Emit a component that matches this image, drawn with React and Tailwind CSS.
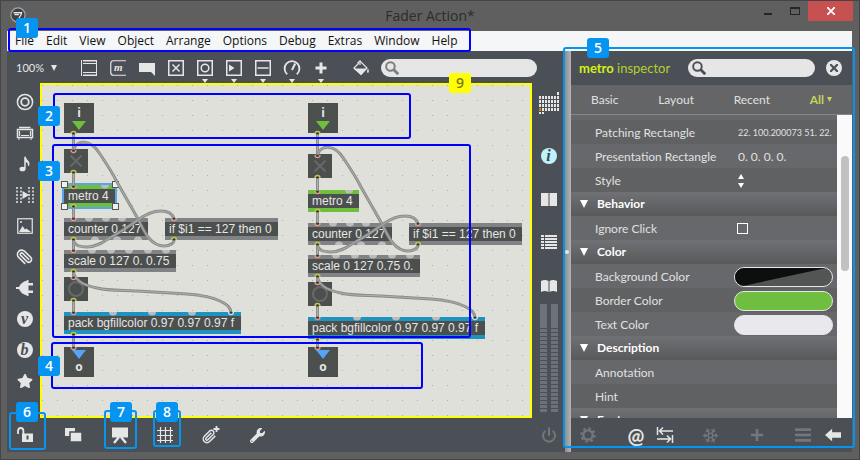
import clsx from 'clsx';
import { FaStar, FaWrench } from 'react-icons/fa';
import { Paperclip, Power, Snowflake } from 'lucide-react';

const MENU = ['File', 'Edit', 'View', 'Object', 'Arrange', 'Options', 'Debug', 'Extras', 'Window', 'Help'];

const Glyph = ({ className = 'w-[18px] h-[18px]', children }) => (
    <svg viewBox="0 0 18 18" className={clsx('shrink-0', className)} fill="none" stroke="currentColor" strokeWidth="1.5" aria-hidden="true">
        {children}
    </svg>
);

const solid = { fill: 'currentColor', stroke: 'none' };
const Box = () => <rect x="1.75" y="1.75" width="14.5" height="14.5" />;

const TOOLS = [
    { name: 'Object', art: <><path d="M1.5 1v16M16.5 1v16" strokeWidth="1" /><path d="M3 1.75h14M3 16.25h14" /><path d="M3 4.5h14M3 13.5h14" strokeWidth="1" /></> },
    { name: 'Message', art: <><path d="M17 1.75H4.5Q1.75 1.75 1.75 4.5v9q0 2.75 2.75 2.75H17" strokeWidth="1.2" /><text x="5" y="12" fontSize="11" fontStyle="italic" fontWeight="700" fontFamily="Liberation Serif, serif" {...solid}>m</text></> },
    { name: 'Comment', art: <path d="M1 4h16v13l-4-4H1z" {...solid} /> },
    { name: 'Toggle', art: <><Box /><path d="m5.5 5.5 7 7m0-7-7 7" /></> },
    { name: 'Button', menu: true, art: <><Box /><circle cx="9" cy="9" r="3.8" /></> },
    { name: 'Number', menu: true, art: <><Box /><path d="m4 5.5 5.5 3.5L4 12.5z" {...solid} /></> },
    { name: 'Slider', menu: true, art: <><Box /><path d="M3.5 9h11" /></> },
    { name: 'Dial', menu: true, art: <><path d="M4.2 15.2a7.4 7.4 0 1 1 9.6 0" strokeWidth="1.8" /><path d="m9 11 3.2-6.5" strokeWidth="2" /></> },
    { name: 'Add', menu: true, art: <path d="M9 3.5v11M3.5 9h11" strokeWidth="3" /> },
];

const BROWSERS = [
    { name: 'Packages', art: <Glyph><circle cx="9" cy="9" r="7.6" /><circle cx="9" cy="9" r="3.8" strokeWidth="1.8" /></Glyph> },
    { name: 'Racks', art: <Glyph><path d="M3 3.5h11.5M1.5 5.5h15v8h-15z" /><path d="M3.5 7v5M14.5 7v5M5 11.5h8M2 15h2m10 0h2" strokeWidth="1.2" /></Glyph> },
    { name: 'Audio', art: <Glyph><path d="M9 1.5c1 4 5.5 4.500 3.500 9.500 0-3-1-4-3.500-4.500" fill="currentColor" strokeWidth="1" /><path d="M9 2v11.500" /><ellipse cx="6.500" cy="14" rx="3" ry="2.300" {...solid} /></Glyph> },
    { name: 'Video', art: <Glyph><path d="M1 1v16M5 1v16M13 1v16M17 1v16" strokeDasharray="2 1.500" /><path d="M6.500 5 13 9l-6.500 4z" {...solid} /></Glyph> },
    { name: 'Images', art: <Glyph><rect x="1.750" y="1.750" width="14.500" height="14.500" strokeWidth="1.200" /><path d="m3 15 3.500-6L9 12.500l1.500-1 4.500 3.500z" {...solid} /><circle cx="5" cy="5" r="1" {...solid} /></Glyph> },
    { name: 'Clippings', art: <Paperclip className="w-[17px] h-[17px] rotate-90" strokeWidth={2.2} /> },
    { name: 'Plug-ins', art: <Glyph><path d="M0 8h3q2-5 8-6.500v15Q5 15 3 10H0zM11 1h1.500v16H11zM12 4h5v2.500h-5zM12 11.500h5V14h-5z" {...solid} /></Glyph> },
    { name: 'Vizzie', letter: 'v' },
    { name: 'Beap', letter: 'b' },
    { name: 'Favorites', art: <FaStar className="w-4 h-4" /> },
];

const tones = {
    gray: 'border-[#818286] bg-[#4b4f4d]',
    green: 'border-[#6fbf3f] bg-[#4b4f4d]',
    blue: 'border-[#1f93bf] bg-[#4b4f4d]',
};

// Objects are placed in patcher coordinates
const patch = (x, dy, scaleText) => [
    { kind: 'inlet', x, y: 18 },
    { kind: 'toggle', x, y: 64 + dy },
    { kind: 'box', x, y: 100 + dy, w: 51, tone: 'green', text: 'metro 4', selected: dy === 0 },
    { kind: 'box', x, y: 133 + dy, w: 84, tone: 'gray', text: 'counter 0 127' },
    { kind: 'box', x: x + 101, y: 133 + dy, w: 113, tone: 'gray', text: 'if $i1 == 127 then 0' },
    { kind: 'box', x, y: 165 + dy, w: 112, tone: 'gray', text: scaleText },
    { kind: 'bang', x, y: 192 + dy },
    { kind: 'box', x, y: 227 + dy, w: 177, tone: 'blue', text: 'pack bgfillcolor 0.97 0.97 0.97 f' },
    { kind: 'outlet', x, y: 262 },
];

const NODES = [...patch(22, 0, 'scale 0 127 0. 0.75'), ...patch(266, 5, 'scale 0 127 0.75 0.')];

const HANDLES = ['-top-1 -left-[3px]', '-top-1 -right-1', '-bottom-[3px] -left-[3px]', '-bottom-[3px] -right-1'];

const Node = ({ node }) => {
    const place = { left: node.x, top: node.y };

    if (node.kind === 'box') {
        return (
            <div style={{ ...place, width: node.w }} className={clsx('absolute h-[22px] border-y-4 px-1 text-xs leading-[14px] text-[#e6e6e6] whitespace-nowrap', tones[node.tone])}>
                {node.text}
                {node.selected && (
                    <div className="absolute -inset-x-0.5 -inset-y-1.5 border-2 border-[#5aa5e6]">
                        {HANDLES.map(corner => (
                            <span key={corner} className={clsx('absolute w-[7px] h-[7px] bg-[#f0f0ee] border border-[#555]', corner)} />
                        ))}
                    </div>
                )}
            </div>
        );
    }

    if (node.kind === 'toggle' || node.kind === 'bang') {
        return (
            <div style={place} className="absolute w-6 h-6 bg-[#4b4f4d]">
                <svg viewBox="0 0 24 24" fill="none" stroke="#67696a" strokeWidth="2">
                    {node.kind === 'toggle' ? <path d="m6.500 6.500 11 11m0-11-11 11" /> : <circle cx="12" cy="12" r="7" />}
                </svg>
            </div>
        );
    }

    return (
        <div style={place} className="absolute w-[30px] h-[30px] bg-[#4b4f4d] flex flex-col items-center justify-between py-[3px] text-xs leading-[14px] font-bold font-['Open_Sans',sans-serif] text-[#e6e6e6]">
            {node.kind === 'inlet' && <span>i</span>}
            <svg viewBox="0 0 14 9" className="w-3.5 h-[9px]">
                <path d="M0 0h14L7 9z" fill={node.kind === 'inlet' ? '#6fbf3f' : '#55a4f7'} />
            </svg>
            {node.kind === 'outlet' && <span>o</span>}
        </div>
    );
};

const Cord = ({ d }) => (
    <>
        <path d={d} stroke="#8b8d8b" strokeWidth="3" />
        <path d={d} stroke="#adafad" strokeWidth="1" />
    </>
);

const Port = ({ x, y, out, color }) => (
    <>
        <circle cx={x} cy={y} r="1.500" fill="#333" />
        <path d={out ? `M${x - 2.5} ${y + 1}a2.500 2.500 0 1 1 5 0` : `M${x - 2.5} ${y - 1}a2.500 2.500 0 0 0 5 0`} stroke={color || (out ? '#c0c944' : '#e39b8b')} strokeWidth="1.300" />
    </>
);

const Cords = ({ x, dy }) => (
    <g transform={`translate(${x} 0)`}>
        <g fill="#bcbcbe" transform={`translate(0 ${dy})`}>
            {[[41, 101], [25, 134], [42, 134], [58, 134], [28, 166], [47, 166], [65, 166], [84, 166], [102, 166], [49, 228], [88, 228], [128, 228]].map(([px, py]) => (
                <path key={`${px}-${py}`} d={`M${px - 4} ${py - 1}h8a4 3.500 0 0 1-8 0z`} />
            ))}
            {[31, 53, 74].map(px => <path key={px} d={`M${px - 4} 155h8a4 3.500 0 0 0-8 0z`} />)}
        </g>
        <Cord d={`M9.500 48V${66 + dy}`} />
        <g transform={`translate(0 ${dy})`}>
            <Cord d="M9.500 87v14M9.500 121v13M9.500 154v12M9.500 186v7M9.500 215v13" />
            <Cord d="M9.500 65C12 55 26 53 36 69C44 81 50 91 53 97C62 113 68 123 74 134C80 146 86 161 100 161C106 161 110 158 110 155" />
            <Cord d="M9.500 155C10 161 16 162 23 162C34 162 42 155 49 151C60 145 66 140 74 135C82 129 90 126 97 126C106 126 109 130 110 134" />
            <Cord d="M9.500 186C10 194 18 200 33 203C46 206 60 205 73 206C92 207 108 208 123 209C136 210 148 212 156 216C164 220 167 223 167 228" />
        </g>
        <Cord d={`M9.500 ${248 + dy}V263`} />
        <Port x={9.5} y={48} out />
        <g transform={`translate(0 ${dy})`}>
            {[66, 102, 134, 166, 193, 228].map(y => <Port key={y} x={9.5} y={y} />)}
            {[87, 121, 154, 186, 215, 249].map(y => <Port key={y} x={9.5} y={y} out />)}
            <Port x={110} y={134} />
            <Port x={110} y={154} out />
            <Port x={167} y={228} color="#d8d8d8" />
        </g>
        <Port x={9.5} y={263} />
    </g>
);

const Patcher = () => (
    <main className="relative flex-1 min-w-0 overflow-hidden bg-[#dfe0da] border-2 border-[#ffff00] font-['Liberation_Sans',Arial,sans-serif]">
        <svg className="absolute inset-0 w-full h-full">
            <defs>
                <pattern id="grid" width="15" height="15" patternUnits="userSpaceOnUse">
                    <rect width="1" height="1" fill="#aeafaa" />
                </pattern>
            </defs>
            <rect width="100%" height="100%" fill="url(#grid)" />
        </svg>
        {NODES.map((node, i) => <Node key={i} node={node} />)}
        <svg className="absolute inset-0 w-full h-full pointer-events-none" fill="none">
            <Cords x={22} dy={0} />
            <Cords x={266} dy={5} />
        </svg>
    </main>
);

const Search = ({ id, label, className, iconColor }) => (
    <label htmlFor={id} className={clsx('flex items-center h-[18px] rounded-full bg-[#e6e6e6] pl-1', className)}>
        <Glyph className={clsx('w-3.5 h-3.5', iconColor)}>
            <circle cx="7" cy="7" r="5.500" strokeWidth="2.500" />
            <path d="m11 11 6 6" strokeWidth="3.500" />
        </Glyph>
        <input id={id} type="search" aria-label={label} className="flex-1 min-w-0 bg-transparent px-1 text-xs text-[#333] outline-none" />
    </label>
);

const Toolbar = () => (
    <div className="flex items-start h-8 pt-2 text-[#e6e6e6]">
        <label className="flex items-center w-[67px] h-[18px] pl-[9px] text-[11px]">
            <select aria-label="Zoom" className="appearance-none bg-transparent w-[35px] outline-none" defaultValue="100%">
                <option>100%</option>
            </select>
            <svg viewBox="0 0 6 6" className="w-1.5 h-1.5" fill="currentColor"><path d="M0 0h6L3 6z" /></svg>
        </label>
        {TOOLS.map(tool => (
            <button key={tool.name} aria-label={tool.name} className="flex flex-col items-center gap-0.5 w-[29px]">
                <Glyph>{tool.art}</Glyph>
                {tool.menu && <svg viewBox="0 0 6 4" className="w-1.5 h-1" fill="currentColor"><path d="M0 0h6L3 4z" /></svg>}
            </button>
        ))}
        <button aria-label="Fill" className="flex justify-center w-[26px] ml-[13px]">
            <Glyph>
                <path d="M5.500 4 8 2l7 7-6 6.500L2 9l5-5" strokeWidth="1.200" />
                <path d="M1.500 9.500h13.500L9 16z" {...solid} />
                <path d="M8 6V1.500" strokeWidth="1.200" />
                <path d="M16 9.500q1.800 3.500 0 4.500-2-.5 0-4.500z" {...solid} />
            </Glyph>
        </button>
        <Search id="patcher-search" label="Search objects" className="w-[156px] ml-[7px]" iconColor="text-[#7b7d81]" />
    </div>
);

const LeftBar = () => (
    <nav className="w-[33px] pt-[3px] flex flex-col shrink-0 text-[#e6e6e6]">
        {BROWSERS.map(item => (
            <button key={item.name} aria-label={item.name} className="flex items-center justify-center h-[31px] pl-0.5">
                {item.letter ? (
                    <span className="flex items-center justify-center w-4 h-4 rounded-full bg-[#e6e6e6] text-[#4b5057] text-base leading-4 font-bold italic font-['Liberation_Serif',serif]">{item.letter}</span>
                ) : item.art}
            </button>
        ))}
    </nav>
);

const Meter = () => (
    <svg viewBox="0 0 7 108" className="w-[7px] h-[108px]" fill="#6d717a">
        <rect width="7" height="24" />
        {Array.from({ length: 21 }).map((_, i) => <rect key={i} y={25 + i * 4} width="7" height="3" />)}
    </svg>
);

const RightBar = () => (
    <nav className="w-[33px] shrink-0 flex flex-col items-center text-[#e6e6e6]">
        <button aria-label="Matrix" className="mt-[9px]">
            <svg viewBox="0 0 20 22" className="w-5 h-[22px]" fill="currentColor">
                <rect x="18" y="0" width="2" height="3" />
                {Array.from({ length: 28 }).map((_, i) => (
                    <rect key={i} x={(i % 7) * 3} y={4 + Math.floor(i / 7) * 4} width="2" height="3" fill={i === 21 ? '#e07b00' : 'currentColor'} />
                ))}
                <rect x="0" y="20" width="2" height="2" />
                <rect x="3" y="20" width="2" height="2" />
            </svg>
        </button>
        <button aria-label="Inspector" className="flex items-center justify-center w-4 h-4 mt-[34px] rounded-full bg-[#bff3fb] text-[#3f454c] text-base leading-4 font-bold italic font-['Liberation_Serif',serif]">i</button>
        <button aria-label="Reference" className="mt-[29px]">
            <svg viewBox="0 0 16 13" className="w-4 h-[13px]" fill="currentColor"><path d="M0 0h7v13H0zM9 0h7v13H9z" /><path d="M7 0h2v13H7z" fill="#999" /></svg>
        </button>
        <button aria-label="Console" className="mt-7">
            <svg viewBox="0 0 16 16" className="w-4 h-4" fill="currentColor">
                {[1, 4, 7, 10, 13].map(y => <path key={y} d={`M0 ${y}h3v2H0zM4 ${y}h12v2H4z`} />)}
            </svg>
        </button>
        <button aria-label="Lessons" className="mt-[30px]">
            <svg viewBox="0 0 16 12" className="w-4 h-3" fill="currentColor"><path d="M0 1q4-2 7.500 0v11Q4 10 0 12zM8.500 1Q12-1 16 1v11q-4-2-7.500 0z" /></svg>
        </button>
        <div className="flex gap-1 mt-3">
            <Meter />
            <Meter />
        </div>
    </nav>
);

const BottomBar = () => (
    <div className="flex items-center h-[34px] text-[#e6e6e6]">
        <button aria-label="Unlock" className="flex justify-center w-9">
            <Glyph>
                <path d="M2 8V5q0-3 2.700-3t2.700 3v3" strokeWidth="1.800" />
                <path d="M6 7.500h11V16H6z" {...solid} />
                <path d="M11.500 9.500v4" stroke="#4b5057" strokeWidth="2" />
            </Glyph>
        </button>
        <button aria-label="New view" className="flex justify-center w-[59px]">
            <Glyph><path d="M1 2h10v8H1z" {...solid} /><path d="M6 6h12v10H6z" fill="currentColor" stroke="#4b5057" strokeWidth="1.500" /></Glyph>
        </button>
        <button aria-label="Presentation" className="flex justify-center w-[35px]">
            <Glyph><path d="M1 1.500h16v10H1z" {...solid} /><path d="m8 11-5 6M10 11l5 6" strokeWidth="2.500" /></Glyph>
        </button>
        <button aria-label="Grid" className="flex justify-center w-[56px]">
            <Glyph><path d="M4.500 1v16M9.500 1v16M14.500 1v16M1 4.500h16M1 9.500h16M1 14.500h16" strokeWidth="1.200" /></Glyph>
        </button>
        <button aria-label="Attach" className="flex items-center justify-center w-9">
            <Glyph>
                <g transform="translate(0 3) scale(.62)"><path d="m21.440 11.050-9.190 9.190a6 6 0 0 1-8.490-8.490l8.570-8.570A4 4 0 1 1 18 8.840l-8.590 8.570a2 2 0 0 1-2.830-2.830l8.490-8.480" strokeWidth="2.400" /></g>
                <path d="M14.500 0v6M11.500 3h6" strokeWidth="1.800" />
            </Glyph>
        </button>
        <button aria-label="Tools" className="flex justify-center w-[56px]"><FaWrench className="w-[15px] h-[15px]" /></button>
        <button aria-label="Audio on" className="flex justify-center w-[33px] ml-auto text-[#73767b]"><Power className="w-4 h-4" strokeWidth={3} /></button>
    </div>
);

const Row = ({ label, id, odd, children }) => (
    <div className={clsx('flex items-center h-6 shrink-0 pt-px pl-6', odd ? 'bg-[#67686b]' : 'bg-[#606163]')}>
        <label htmlFor={id} className="w-[143px] shrink-0">{label}</label>
        {children}
    </div>
);

const Section = ({ title }) => (
    <h2 className="flex items-center gap-[9px] h-6 shrink-0 pl-[9px] font-bold text-white bg-linear-to-b from-[#707174] to-[#58595b]">
        <svg viewBox="0 0 8 8" className="w-2 h-2" fill="currentColor"><path d="M0 0h8L4 8z" /></svg>
        {title}
    </h2>
);

const swatch = 'flex-1 -ml-1 mr-1 h-5 rounded-full border border-[#e6e6e6] overflow-hidden';

const Inspector = () => (
    <aside className="w-[281px] shrink-0 flex flex-col text-xs leading-4 text-[#e0e0e0]">
        <div className="flex items-center h-[34px] px-2">
            <h1 className="w-[109px] text-[13px] text-[#b3cf2d]"><b className="text-[#d4f014]">metro</b> inspector</h1>
            <Search id="inspector-search" label="Search attributes" className="w-[127px]" iconColor="text-[#4b5057]" />
            <button aria-label="Close inspector" className="flex items-center justify-center w-4 h-4 ml-auto mr-0.5 rounded-full bg-[#e6e6e6] text-[#4b5057]">
                <svg viewBox="0 0 8 8" className="w-2 h-2" fill="none" stroke="currentColor" strokeWidth="2.200"><path d="m0 0 8 8M8 0 0 8" /></svg>
            </button>
        </div>
        <div className="flex items-center justify-between h-[30px] px-5 bg-[#646567] border-b border-[#85868a]">
            <button>Basic</button>
            <button>Layout</button>
            <button>Recent</button>
            <button className="flex items-center gap-[3px] font-bold text-[#c3d35c]">
                All
                <svg viewBox="0 0 5 5" className="w-[5px] h-[5px]" fill="currentColor"><path d="M0 0h5L2.500 5z" /></svg>
            </button>
        </div>
        <div className="flex flex-1 min-h-0">
            <form className="flex flex-col flex-1 min-w-0 overflow-hidden">
                <div className="h-[5px] shrink-0 bg-[#67686b]" />
                <Row label="Patching Rectangle" id="patching">
                    <input id="patching" defaultValue="22. 100.200073 51. 22." className="flex-1 min-w-0 bg-transparent text-[9px] outline-none" />
                </Row>
                <Row label="Presentation Rectangle" id="presentation" odd>
                    <input id="presentation" defaultValue="0. 0. 0. 0." className="flex-1 min-w-0 bg-transparent outline-none" />
                </Row>
                <Row label="Style" id="style">
                    <button id="style" type="button" aria-label="Style">
                        <svg viewBox="0 0 6 14" className="w-1.5 h-3.5" fill="#fff"><path d="M3 0l3 5H0zM3 14l3-5H0z" /></svg>
                    </button>
                </Row>
                <Section title="Behavior" />
                <Row label="Ignore Click" id="ignore" odd>
                    <input id="ignore" type="checkbox" className="appearance-none w-[11px] h-[11px] -ml-px border border-white" />
                </Row>
                <Section title="Color" />
                <Row label="Background Color" id="bgcolor" odd>
                    <button id="bgcolor" type="button" aria-label="Background Color" className={clsx(swatch, 'bg-[#535554]')}>
                        <svg viewBox="0 0 98 20" preserveAspectRatio="none" className="w-full h-full"><path d="M0 0h92L8 20H0z" fill="#0d0f0e" /></svg>
                    </button>
                </Row>
                <Row label="Border Color" id="bordercolor">
                    <button id="bordercolor" type="button" aria-label="Border Color" className={clsx(swatch, 'bg-[#70be40]')} />
                </Row>
                <Row label="Text Color" id="textcolor" odd>
                    <button id="textcolor" type="button" aria-label="Text Color" className={clsx(swatch, 'bg-[#e9e8ed]')} />
                </Row>
                <Section title="Description" />
                <Row label="Annotation" id="annotation" odd>
                    <input id="annotation" className="flex-1 min-w-0 bg-transparent outline-none" />
                </Row>
                <Row label="Hint" id="hint">
                    <input id="hint" className="flex-1 min-w-0 bg-transparent outline-none" />
                </Row>
                <Section title="Font" />
            </form>
            <div className="w-[15px] pt-[41px] bg-[#fafafa]">
                <div className="w-2 h-[115px] mx-auto rounded-full bg-[#c1c1c1]" />
            </div>
        </div>
        <div className="flex items-center h-[34px] pl-[9px] text-[#73767b]">
            <button aria-label="Settings">
                <Glyph className="w-4 h-4"><circle cx="9" cy="9" r="5.300" strokeWidth="2.600" /><circle cx="9" cy="9" r="7.500" strokeWidth="2.400" strokeDasharray="2.945 2.945" /></Glyph>
            </button>
            <button aria-label="Attributes" className="w-4 ml-8 flex justify-center text-xl leading-4 font-bold text-[#e6e6e6]">@</button>
            <button aria-label="Transfer" className="ml-3 text-[#e6e6e6]">
                <Glyph><path d="M1.500 1v8M3 5h14M7 1.500 3.500 5 7 8.500M16.500 9v8M1 13h14M11 9.500l3.500 3.500-3.500 3.500" /></Glyph>
            </button>
            <button aria-label="Freeze" className="ml-7"><Snowflake className="w-[17px] h-[17px]" strokeWidth={2} /></button>
            <button aria-label="Add attribute" className="ml-8"><Glyph className="w-3 h-3"><path d="M9 0v18M0 9h18" strokeWidth="4" /></Glyph></button>
            <button aria-label="List" className="ml-8"><Glyph className="w-4 h-4"><path d="M0 3h18M0 9h18M0 15h18" strokeWidth="3" /></Glyph></button>
            <button aria-label="Back" className="ml-3.5 text-[#e6e6e6]"><Glyph className="w-4 h-4"><path d="M0 9l8-7v4h10v6H8v4z" {...solid} /></Glyph></button>
        </div>
    </aside>
);

// Numbered callouts laid over the window
const CALLOUTS = [
    { n: 1, frame: 'left-2 top-7 w-[463px] h-6', badge: 'left-4 top-[18px]' },
    { n: 2, frame: 'left-[53px] top-[93px] w-[358px] h-[46px]', badge: 'left-[38px] top-[106px]' },
    { n: 3, frame: 'left-[52px] top-36 w-[419px] h-[194px]', badge: 'left-[38px] top-[161px]' },
    { n: 4, frame: 'left-[51px] top-[342px] w-[372px] h-[47px]', badge: 'left-[38px] top-[356px]' },
    { n: 5, light: true, frame: 'right-[5px] top-[47px] w-[292px] bottom-3', badge: 'right-[251px] top-[38px]' },
    { n: 6, light: true, frame: 'left-[9px] bottom-2.5 w-[37px] h-[38px]', badge: 'left-4 bottom-[38px]' },
    { n: 7, light: true, frame: 'left-[104px] bottom-[11px] w-[33px] h-[39px]', badge: 'left-[110px] bottom-[38px]' },
    { n: 8, light: true, frame: 'left-[153px] bottom-[13px] w-7 h-[37px]', badge: 'left-[156px] bottom-[38px]' },
    { n: 9, badge: 'left-[449px] top-[73px]' },
];

const Callout = ({ n, light, frame, badge }) => (
    <>
        {frame && <div className={clsx('absolute border-2 rounded-[3px] pointer-events-none', light ? 'border-[#0594f0]' : 'border-[#0000ff]', frame)} />}
        <span className={clsx("absolute flex items-center justify-center w-[22px] h-5 rounded-[3px] text-sm leading-5 font-semibold font-['Open_Sans',sans-serif]", n === 9 ? 'bg-[#ffff00] text-[#77772c]' : 'bg-[#0594f0] text-white', badge)}>{n}</span>
    </>
);

export default function App() {
    return (
        <div className="relative flex flex-col h-screen overflow-hidden bg-[#5f5f5f] ring-1 ring-inset ring-[#454545] pt-px pl-[7px] pr-2 pb-2 font-['Lato',sans-serif]">
            <header className="flex items-start h-[30px] shrink-0 pl-[3px] font-['Open_Sans',sans-serif]">
                <Glyph className="w-4 h-4 mt-1.5 text-[#a5a8ab]">
                    <circle cx="9" cy="9" r="8" fill="#3d4248" strokeWidth="1.300" />
                    <path d="M4 6.500h9q0 2.500-3 6M5 8.500h5" stroke="#e6e6e6" />
                </Glyph>
                <div className="flex-1 pl-[70px] text-center text-sm leading-[30px] text-[#2c2c2c]">Fader Action*</div>
                <button aria-label="Minimize" className="mt-3 w-2 h-0.5 bg-[#252525]" />
                <button aria-label="Maximize" className="mt-1.5 ml-[18px] w-2.5 h-2 border border-t-2 border-[#252525]" />
                <button aria-label="Close" className="-mr-px ml-2 w-[45px] h-5 flex items-center justify-center bg-[#c75050] text-white">
                    <svg viewBox="0 0 8 8" className="w-2 h-2" fill="none" stroke="currentColor" strokeWidth="1.800"><path d="m0 0 8 8M8 0 0 8" /></svg>
                </button>
            </header>
            <nav className="flex items-center gap-3 h-5 shrink-0 pl-2 bg-[#f5f6f7] text-xs text-[#111] font-['Open_Sans',sans-serif]">
                {MENU.map(item => <button key={item}>{item}</button>)}
            </nav>
            <div className="flex flex-1 min-h-0 bg-[#4b5057]">
                <div className="flex flex-col flex-1 min-w-0">
                    <Toolbar />
                    <div className="flex flex-1 min-h-0">
                        <LeftBar />
                        <Patcher />
                        <RightBar />
                    </div>
                    <BottomBar />
                </div>
                <div className="flex items-center w-1.5 shrink-0 bg-linear-to-r from-[#8d8d8d] to-[#b4b4b4]">
                    <span className="w-1 h-1 rounded-full bg-[#e6e6e6]" />
                </div>
                <Inspector />
            </div>
            {CALLOUTS.map(callout => <Callout key={callout.n} {...callout} />)}
        </div>
    );
}
